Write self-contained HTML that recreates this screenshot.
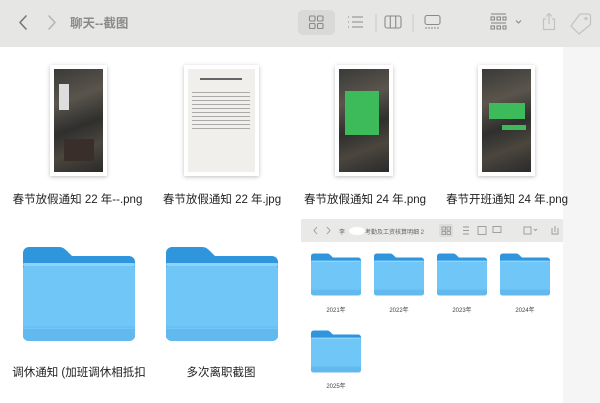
<!DOCTYPE html>
<html><head><meta charset="utf-8"><style>
*{margin:0;padding:0;box-sizing:border-box}
body{width:600px;height:403px;overflow:hidden;background:#fff;font-family:"Liberation Sans","Noto Sans CJK SC",sans-serif;position:relative}
.tb{position:absolute;left:0;top:0;width:600px;height:47px;background:#e6e6e5}
.a{position:absolute}
.lbl{position:absolute;font-size:11.5px;color:#222;white-space:nowrap;text-align:center}
.th{position:absolute;background:#fff;box-shadow:0 1px 4px rgba(0,0,0,.25)}
.ph{position:absolute;left:4px;top:4px;right:4px;bottom:4px;background:linear-gradient(160deg,#3a3a38,#5a554c 30%,#2f2f2e 55%,#4b463e 75%,#2a2a2a)}
.strip{position:absolute;left:563px;top:47px;width:37px;height:356px;background:#f5f5f5}
.sl{position:absolute;font-size:6px;color:#444;text-align:center;width:50px}
</style></head><body>
<div class="tb"></div>
<svg class="a" style="left:0;top:0" width="600" height="47">
<g fill="none" stroke="#777" stroke-width="1.6" stroke-linecap="round" stroke-linejoin="round">
<path d="M26 16 L20 22.5 L26 29"/>
</g>
<g fill="none" stroke="#b5b5b5" stroke-width="1.6" stroke-linecap="round" stroke-linejoin="round">
<path d="M49 16 L55 22.5 L49 29"/>
</g>
<rect x="298" y="10" width="37" height="25" rx="5" fill="#d9d9d8"/>
<g fill="none" stroke="#8a8a8a" stroke-width="1.1">
<rect x="309.5" y="16" width="5.5" height="5" rx="1"/><rect x="317.5" y="16" width="5.5" height="5" rx="1"/>
<rect x="309.5" y="23.5" width="5.5" height="5" rx="1"/><rect x="317.5" y="23.5" width="5.5" height="5" rx="1"/>
</g>
<g stroke="#8a8a8a" stroke-width="1.1" fill="none">
<path d="M348 17h1M348 22h1M348 27h1M352 17h11M352 22h11M352 27h11"/>
<line x1="376" y1="14" x2="376" y2="32" stroke="#ccc"/>
<rect x="385" y="16" width="16" height="12" rx="2"/><path d="M390.3 16v12M395.7 16v12"/>
<line x1="413" y1="14" x2="413" y2="32" stroke="#ccc"/>
<rect x="425" y="15.5" width="15" height="9" rx="2"/><path d="M425 28h15" stroke-dasharray="2 1"/>
<path d="M491 14h15"/>
<rect x="491" y="17" width="3.5" height="3" /><rect x="497" y="17" width="3.5" height="3"/><rect x="503" y="17" width="3" height="3"/>
<path d="M491 23h15"/>
<rect x="491" y="26" width="3.5" height="3"/><rect x="497" y="26" width="3.5" height="3"/><rect x="503" y="26" width="3" height="3"/>
<path d="M516 20.5l2.5 2.5 2.5-2.5"/>
</g>
<g stroke="#c2c2c2" stroke-width="1.2" fill="none" stroke-linejoin="round">
<path d="M546 19h-2.5v10.5h11V19H552M549 24V13.5M546 16.5l3-3 3 3"/>
<path d="M580 14h8.5a2 2 0 0 1 2 2v8.5L579 34l-8-8z"/><circle cx="586" cy="18.5" r="1"/>
</g>
<text x="70" y="27.5" font-size="12.5" font-weight="bold" fill="#8a8a8a" font-family="Liberation Sans, Noto Sans CJK SC, sans-serif">聊天--截图</text>
</svg>
<div class="strip"></div>

<div class="th" style="left:50px;top:65px;width:57px;height:111px"><div class="ph"><div class="a" style="left:5px;top:15px;width:10px;height:26px;background:#ddd"></div><div class="a" style="left:10px;top:70px;width:30px;height:22px;background:#3a2e2a"></div></div></div>
<div class="th" style="left:184px;top:65px;width:75px;height:111px"><div class="ph" style="background:#f0efec"><div class="a" style="left:12px;top:9px;width:42px;height:2px;background:#666"></div><div class="a" style="left:4px;top:20px;width:58px;height:40px;background:repeating-linear-gradient(#f0efec 0 3px,#aaa 3px 4px)"></div></div></div>
<div class="th" style="left:335px;top:65px;width:58px;height:111px"><div class="ph"><div class="a" style="left:6px;top:22px;width:34px;height:44px;background:#3dbb5a"></div></div></div>
<div class="th" style="left:478px;top:65px;width:57px;height:111px"><div class="ph"><div class="a" style="left:7px;top:34px;width:36px;height:16px;background:#3dbb5a"></div><div class="a" style="left:20px;top:56px;width:24px;height:5px;background:#3dbb5a"></div></div></div>

<div class="lbl" style="left:10px;top:191px;width:135px">春节放假通知 22 年--.png</div>
<div class="lbl" style="left:157px;top:191px;width:130px">春节放假通知 22 年.jpg</div>
<div class="lbl" style="left:300px;top:191px;width:130px">春节放假通知 24 年.png</div>
<div class="lbl" style="left:442px;top:191px;width:130px">春节开班通知 24 年.png</div>

<svg width="0" height="0" style="position:absolute"><defs>
<symbol id="f" viewBox="0 0 112 94">
<path d="M6 0h30c4 0 6 2 9 5l4 4h57a6 6 0 0 1 6 6v73H0V6a6 6 0 0 1 6-6z" fill="#2f95dc"/>
<rect x="0" y="16" width="112" height="78" rx="6" fill="#6fc6f7"/>
<rect x="0" y="16" width="112" height="3" rx="1.5" fill="#8dd3fa"/>
<path d="M0 80h112" stroke="#62bbef" stroke-width="1"/>
<path d="M0 86a6 6 0 0 0 6 8h100a6 6 0 0 0 6-8v-4H0z" fill="#62b9ee"/>
</symbol></defs></svg>
<svg class="a" style="left:23px;top:247px" width="112" height="94"><use href="#f"/></svg>
<svg class="a" style="left:166px;top:247px" width="112" height="94"><use href="#f"/></svg>
<div class="lbl" style="left:8px;top:364px;width:142px">调休通知 (加班调休相抵扣</div>
<div class="lbl" style="left:156px;top:364px;width:130px">多次离职截图</div>

<div class="a" style="left:301px;top:219px;width:262px;height:184px;background:#fff"></div>
<div class="a" style="left:301px;top:219px;width:262px;height:23px;background:#e9e9e8"></div>
<svg class="a" style="left:301px;top:219px" width="261" height="23">
<g fill="none" stroke="#999" stroke-width="0.9"><path d="M16 8l-3 3.5 3 3.5M26 8l3 3.5-3 3.5"/>
<rect x="138" y="5" width="14" height="13" rx="2" fill="#dcdcdb" stroke="none"/>
<rect x="141" y="8" width="3.5" height="3"/><rect x="146" y="8" width="3.5" height="3"/><rect x="141" y="12.5" width="3.5" height="3"/><rect x="146" y="12.5" width="3.5" height="3"/>
<path d="M162 8h6M162 11.5h6M162 15h6"/><rect x="177" y="7.5" width="8" height="8"/><rect x="192" y="7.5" width="8" height="6"/>
<rect x="223" y="8" width="7" height="7"/><path d="M233 10l1.5 1.5 1.5-1.5"/><path d="M251 9v6h6v-6M254 13v-6"/></g>
<text x="38" y="15" font-size="6" fill="#666" font-family="Liberation Sans, Noto Sans CJK SC, sans-serif">李</text>
<ellipse cx="56" cy="12" rx="8" ry="4" fill="#fff"/>
<text x="64" y="15" font-size="6" fill="#666" font-family="Liberation Sans, Noto Sans CJK SC, sans-serif">考勤及工资核算明细 2</text>
</svg>
<svg class="a" style="left:311px;top:253px" width="50" height="43"><use href="#f"/></svg>
<svg class="a" style="left:374px;top:253px" width="50" height="43"><use href="#f"/></svg>
<svg class="a" style="left:437px;top:253px" width="50" height="43"><use href="#f"/></svg>
<svg class="a" style="left:500px;top:253px" width="50" height="43"><use href="#f"/></svg>
<svg class="a" style="left:311px;top:330px" width="50" height="43"><use href="#f"/></svg>
<div class="sl" style="left:311px;top:305px">2021年</div>
<div class="sl" style="left:374px;top:305px">2022年</div>
<div class="sl" style="left:437px;top:305px">2023年</div>
<div class="sl" style="left:500px;top:305px">2024年</div>
<div class="sl" style="left:311px;top:381px">2025年</div>
</body></html>
